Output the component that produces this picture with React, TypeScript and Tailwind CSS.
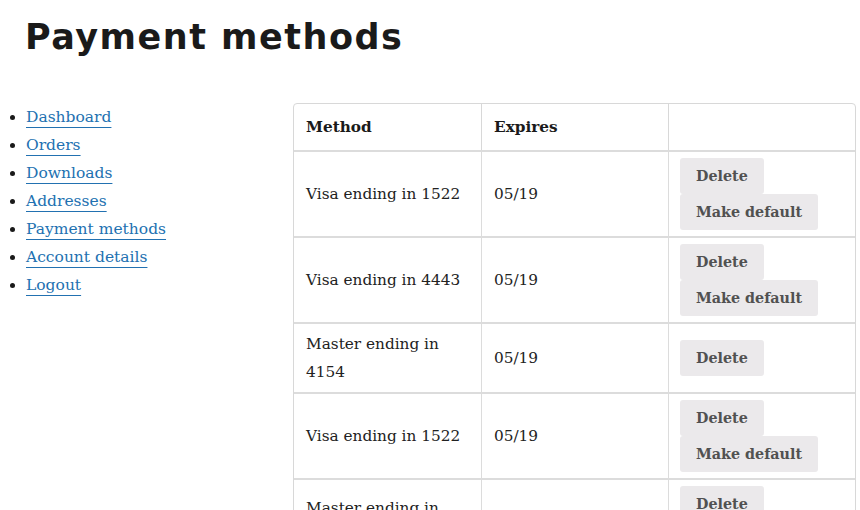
const navItems = [
  "Dashboard",
  "Orders",
  "Downloads",
  "Addresses",
  "Payment methods",
  "Account details",
  "Logout",
];

type Method = {
  name: string;
  expires: string;
  canDefault: boolean;
};

const methods: Method[] = [
  { name: "Visa ending in 1522", expires: "05/19", canDefault: true },
  { name: "Visa ending in 4443", expires: "05/19", canDefault: true },
  { name: "Master ending in 4154", expires: "05/19", canDefault: false },
  { name: "Visa ending in 1522", expires: "05/19", canDefault: true },
  { name: "Master ending in 4154", expires: "05/19", canDefault: true },
];

function ActionButton({ label }: { label: string }) {
  return (
    <button className="block h-9 rounded-[3px] bg-[#ebe9eb] px-4 text-[14.3px] font-bold text-[#515151]">
      {label}
    </button>
  );
}

export default function App() {
  return (
    <div className="h-[510px] w-[860px] overflow-hidden bg-white font-['DejaVu_Serif',serif] text-[#222]">
      <h1 className="pl-[25px] pt-[12px] font-['DejaVu_Sans',sans-serif] text-[35px] font-bold leading-[50px] tracking-[1.5px] text-[#1a1a1a]">
        Payment methods
      </h1>

      <div className="mt-[41px] flex">
        <ul className="w-[293px] shrink-0 list-disc pl-[26px] text-[15.5px] leading-[28px] text-[#1a1a1a]">
          {navItems.map((item) => (
            <li key={item}>
              <a
                href="#"
                className="text-[#2271b1] underline decoration-1 underline-offset-[5px]"
              >
                {item}
              </a>
            </li>
          ))}
        </ul>

        <div className="w-[563px] overflow-hidden rounded-t-[4px] border border-[#d8d8d8]">
          <table className="w-full table-fixed border-separate border-spacing-0 text-[15.3px] leading-[28px]">
            <thead>
              <tr>
                <th className="h-[46px] px-3 text-left font-bold text-[#1a1a1a]">
                  Method
                </th>
                <th className="border-l border-[#d8d8d8] px-3 text-left font-bold text-[#1a1a1a]">
                  Expires
                </th>
                <th className="border-l border-[#d8d8d8]"></th>
              </tr>
            </thead>
            <tbody>
              {methods.map((m, i) => (
                <tr key={i}>
                  <td className="border-t-2 border-[#dcdcdc] px-3 py-[6px] align-middle">
                    {m.name}
                  </td>
                  <td className="border-l border-t-2 border-[#dcdcdc] px-3 py-[6px] align-middle">
                    {m.expires}
                  </td>
                  <td className="border-l border-t-2 border-[#dcdcdc] py-[6px] pl-[11px] pr-3 align-middle">
                    <ActionButton label="Delete" />
                    {m.canDefault && <ActionButton label="Make default" />}
                  </td>
                </tr>
              ))}
            </tbody>
          </table>
        </div>
      </div>
    </div>
  );
}
